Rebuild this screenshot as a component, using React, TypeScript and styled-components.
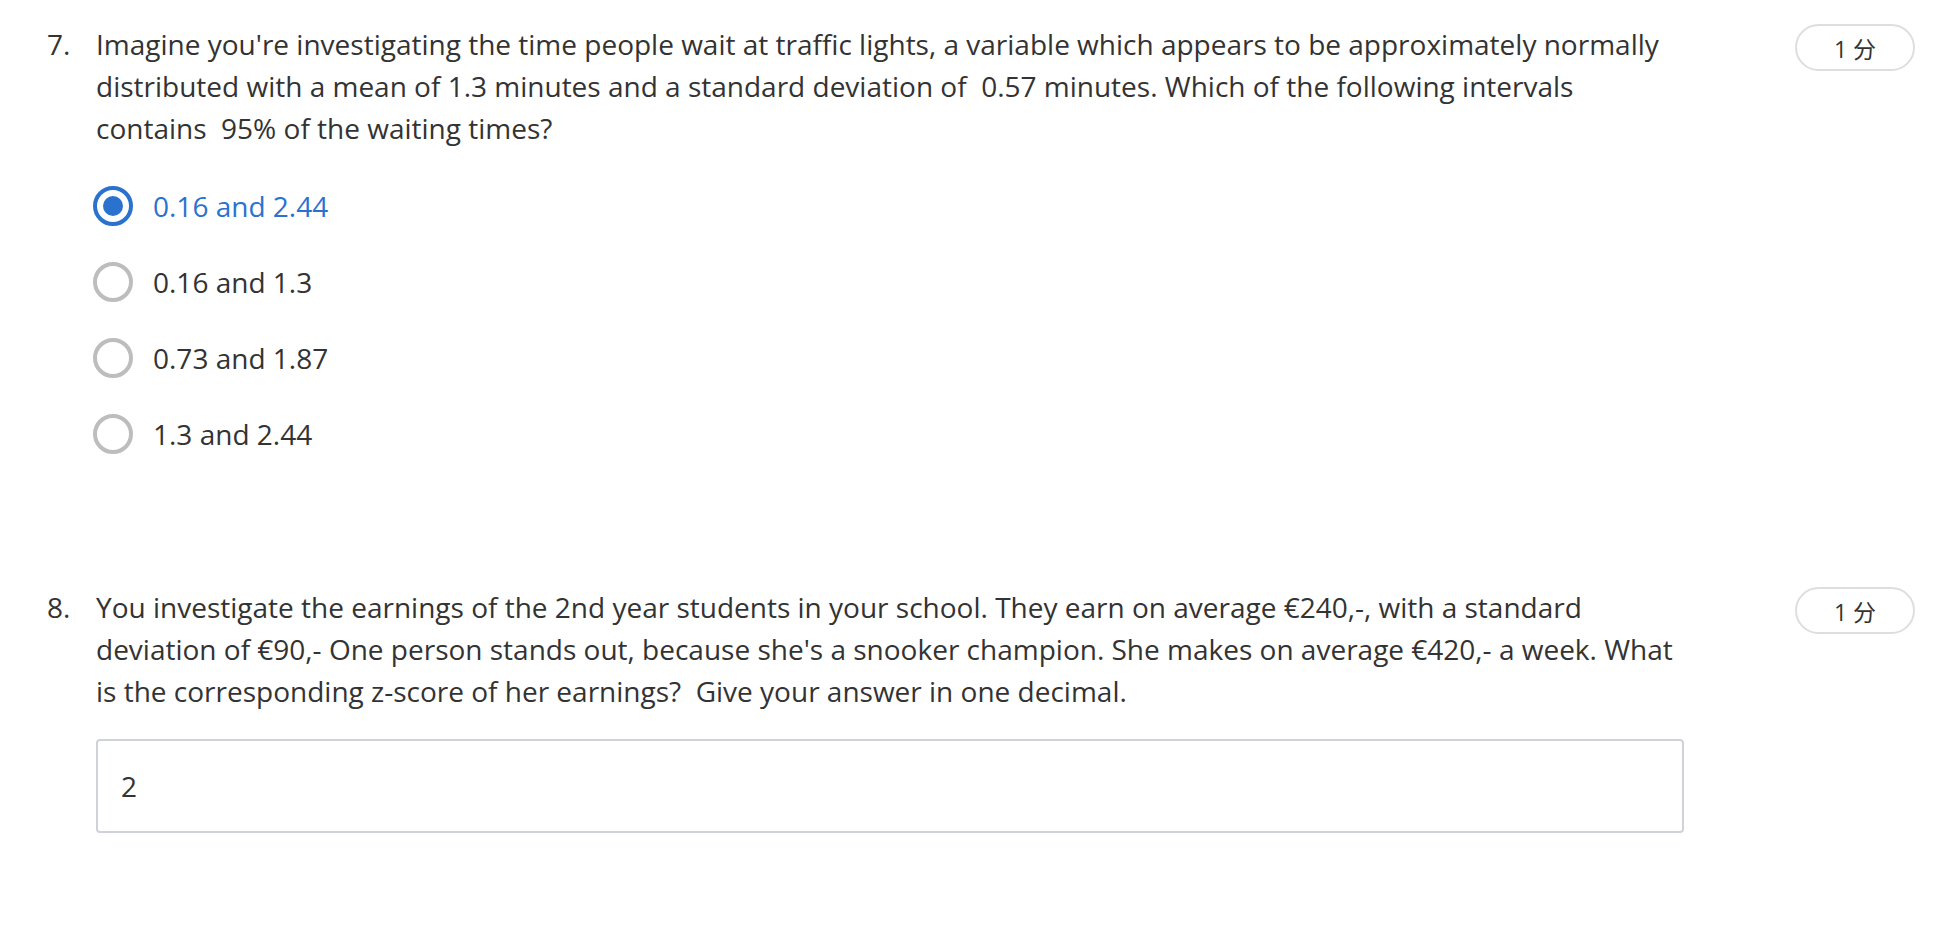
import { createGlobalStyle } from "styled-components";
import styled from "styled-components";

const GlobalStyle = createGlobalStyle`
  html, body {
    margin: 0;
    padding: 0;
    background: #ffffff;
  }
  body {
    font-family: "Open Sans", "Noto Sans CJK SC", sans-serif;
    color: #333333;
  }
`;

type Option = {
  label: string;
  selected?: boolean;
};

const q7Options: Option[] = [
  { label: "0.16 and 2.44", selected: true },
  { label: "0.16 and 1.3" },
  { label: "0.73 and 1.87" },
  { label: "1.3 and 2.44" },
];

const Page = styled.div`
  padding: 23px 0 0 47px;
  display: flex;
  flex-direction: column;
  gap: 114px;
`;

const Question = styled.section`
  display: grid;
  grid-template-columns: 49px 1588px 111px 120px;
  align-items: start;
`;

const Number = styled.div`
  font-size: 28px;
  line-height: 42px;
`;

const Body = styled.div`
  display: flex;
  flex-direction: column;
`;

const Title = styled.div`
  font-size: 28px;
  line-height: 42px;
  white-space: pre;
`;

const Points = styled.div`
  grid-column: 4;
  margin-top: 1px;
  height: 47px;
  border: 2px solid #dedede;
  border-radius: 24px;
  box-sizing: border-box;
  display: flex;
  align-items: center;
  justify-content: center;
  font-size: 23px;
  color: #333333;
  font-family: "Open Sans", "Noto Sans CJK SC", sans-serif;
`;

const Options = styled.div`
  margin-top: 19px;
  margin-left: -3px;
  display: flex;
  flex-direction: column;
`;

const OptionRow = styled.label<{ $selected?: boolean }>`
  height: 76px;
  display: flex;
  align-items: center;
  gap: 20px;
  font-size: 28px;
  color: ${(p) => (p.$selected ? "#2b72cf" : "#333333")};
  cursor: pointer;
`;

const Radio = styled.span<{ $selected?: boolean }>`
  width: 40px;
  height: 40px;
  box-sizing: border-box;
  border-radius: 50%;
  border: 4px solid ${(p) => (p.$selected ? "#2b72cf" : "#bdbdbd")};
  display: grid;
  place-items: center;
  background: #ffffff;

  &::after {
    content: "";
    width: 20px;
    height: 20px;
    border-radius: 50%;
    background: ${(p) => (p.$selected ? "#2b72cf" : "transparent")};
  }
`;

const AnswerBox = styled.div`
  margin-top: 27px;
  height: 94px;
  box-sizing: border-box;
  border: 2px solid #cfd2d9;
  border-radius: 4px;
  padding: 0 23px;
  display: flex;
  align-items: center;
  font-size: 28px;
  color: #333333;
`;

export default function App() {
  return (
    <>
      <GlobalStyle />
      <Page>
        <Question>
          <Number>7.</Number>
          <Body>
            <Title>
              {"Imagine you're investigating the time people wait at traffic lights, a variable which appears to be approximately normally\ndistributed with a mean of 1.3 minutes and a standard deviation of  0.57 minutes. Which of the following intervals\ncontains  95% of the waiting times?"}
            </Title>
            <Options>
              {q7Options.map((o) => (
                <OptionRow key={o.label} $selected={o.selected}>
                  <Radio $selected={o.selected} />
                  {o.label}
                </OptionRow>
              ))}
            </Options>
          </Body>
          <Points>1 分</Points>
        </Question>

        <Question>
          <Number>8.</Number>
          <Body>
            <Title>
              {"You investigate the earnings of the 2nd year students in your school. They earn on average €240,-, with a standard\ndeviation of €90,- One person stands out, because she's a snooker champion. She makes on average €420,- a week. What\nis the corresponding z-score of her earnings?  Give your answer in one decimal."}
            </Title>
            <AnswerBox>2</AnswerBox>
          </Body>
          <Points>1 分</Points>
        </Question>
      </Page>
    </>
  );
}
